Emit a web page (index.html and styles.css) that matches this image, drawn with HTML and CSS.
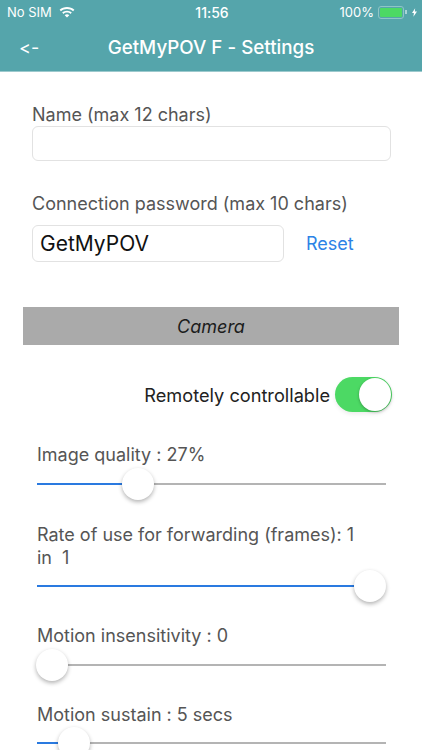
FILE: index.html
```html
<!DOCTYPE html>
<html lang="en">
<head>
<meta charset="utf-8">
<title>GetMyPOV F - Settings</title>
<link rel="stylesheet" href="styles.css">
</head>
<body>
<div class="screen">
  <header class="header">
    <div class="status">
      <div class="status-left">
        <span>No SIM</span>
        <svg class="wifi" viewBox="0 0 16 12" width="16" height="12"><path fill="#fff" d="M8 1C5.2 1 2.6 2 .6 3.800l1.300 1.400C3.600 3.700 5.700 2.900 8 2.900s4.400.8 6.100 2.300l1.300-1.400C13.400 2 10.800 1 8 1zM8 4.700c-1.800 0-3.500.7-4.800 1.800l1.300 1.400C5.400 7 6.600 6.500 8 6.500s2.600.5 3.500 1.400l1.300-1.400C11.500 5.400 9.800 4.700 8 4.700zM8 8.300c-.9 0-1.700.3-2.300.9L8 11.600l2.300-2.400c-.6-.6-1.400-.9-2.300-.9z"/></svg>
      </div>
      <span class="clock">11:56</span>
      <div class="status-right">
        <span>100%</span>
        <span class="battery"><span class="battery-fill"></span></span>
        <span class="battery-cap"></span>
        <svg class="bolt" viewBox="0 0 6 10" width="5" height="9"><path fill="#fff" d="M3.800 0 0 5.600h2.300L1.700 10 6 3.900H3.400z"/></svg>
      </div>
    </div>
    <div class="navbar">
      <span class="back">&lt;-</span>
      <span class="title">GetMyPOV F - Settings</span>
    </div>
  </header>

  <main class="content">
    <section class="form">
      <label class="field-label">Name (max 12 chars)</label>
      <div class="input name-input"></div>
      <label class="field-label password-label">Connection password (max 10 chars)</label>
      <div class="password-row">
        <div class="input password-input">GetMyPOV</div>
        <span class="reset">Reset</span>
      </div>
    </section>

    <div class="band">Camera</div>

    <div class="toggle-row">
      <span>Remotely controllable</span>
      <span class="switch"><span class="knob"></span></span>
    </div>

    <div class="slider-block quality">
      <div class="slider-label">Image quality : 27%</div>
      <div class="slider"><span class="fill fill-27"></span><span class="thumb thumb-27"></span></div>
    </div>
    <div class="slider-block rate">
      <div class="slider-label">Rate of use for forwarding (frames): 1<br>in&nbsp; 1</div>
      <div class="slider"><span class="fill fill-100"></span><span class="thumb thumb-100"></span></div>
    </div>
    <div class="slider-block insens">
      <div class="slider-label">Motion insensitivity : 0</div>
      <div class="slider"><span class="thumb thumb-0"></span></div>
    </div>
    <div class="slider-block sustain">
      <div class="slider-label">Motion sustain : 5 secs</div>
      <div class="slider"><span class="fill fill-5"></span><span class="thumb thumb-5"></span></div>
    </div>
  </main>
</div>
</body>
</html>
```
FILE: styles.css
```css
* { box-sizing: border-box; }
html, body { margin: 0; padding: 0; }
body {
  width: 422px;
  height: 750px;
  overflow: hidden;
  background: #fff;
  font-family: Inter, "Liberation Sans", sans-serif;
  font-variant-ligatures: none;
  font-feature-settings: "calt" 0;
  color: #4f4f4f;
}
.screen { width: 422px; height: 750px; overflow: hidden; }
.header { height: 72px; background: #55a5ab; border-bottom: 1px solid #9cc9cd; color: #fff; }
.status {
  height: 24px;
  padding: 0 5px 0 7px;
  display: grid;
  grid-template-columns: 1fr auto 1fr;
  align-items: center;
  font-size: 13px;
}
.status-left { display: flex; align-items: center; gap: 7px; }
.status-right { display: flex; align-items: center; justify-content: flex-end; gap: 0; }
.clock { font-size: 14px; font-weight: 500; }
.battery {
  width: 26px; height: 13px; margin-left: 4px;
  border: 1px solid #8fc6c6; border-radius: 3px; padding: 1px; display: block;
}
.battery-fill { display: block; width: 100%; height: 100%; background: #4cd964; border-radius: 1px; }
.battery-cap { width: 2px; height: 4px; background: #a9d4d6; margin-left: 1px; }
.bolt { margin-left: 5px; }
.navbar { height: 47px; position: relative; display: flex; align-items: center; justify-content: center; }
.back { position: absolute; left: 19px; top: 13px; font-size: 18px; line-height: 22px; }
.title { font-size: 18.8px; font-weight: 500; }
.content { display: flex; flex-direction: column; }
.form { padding: 31px 32px 0; }
.field-label { display: block; font-size: 18px; line-height: 23px; color: #555; }
.input { border: 1px solid #e2e2e2; border-radius: 6px; background: #fff; }
.name-input { width: 359px; height: 35px; }
.password-label { margin-top: 31px; }
.password-row { display: flex; align-items: center; margin-top: 10px; }
.password-input {
  width: 252px; height: 37px; padding: 0 7px;
  display: flex; align-items: center;
  font-size: 21px; color: #111;
}
.reset { margin-left: 22px; font-size: 18px; color: #2c83e6; }
.band {
  margin: 45px 23px 0; height: 38px; background: #aaa;
  display: flex; align-items: center; justify-content: center;
  font-size: 18px; font-style: italic; color: #1c1c1c;
}
.toggle-row {
  margin-top: 32px; padding-right: 30px; height: 35px;
  display: flex; align-items: center; justify-content: flex-end; gap: 5px;
  font-size: 18.2px; color: #222;
}
.switch {
  width: 57px; height: 35px; border-radius: 18px; background: #4cd964;
  padding: 1px; display: flex; justify-content: flex-end;
  box-shadow: 0 2px 4px rgba(0,0,0,.08);
}
.knob { width: 32px; height: 33px; border-radius: 50%; background: #fff; box-shadow: 0 1px 3px rgba(0,0,0,.3); }
.slider-block { padding: 0 36px 0 37px; }
.slider-label { font-size: 18px; line-height: 23px; color: #555; }
.slider { position: relative; height: 2px; background: #b4b4b4; margin-top: 16.5px; }
.quality { margin-top: 31px; }
.rate { margin-top: 38px; }
.insens { margin-top: 37px; }
.sustain { margin-top: 37px; }
.fill { position: absolute; left: 0; top: 0; height: 2px; background: #2a7ae0; display: block; }
.thumb {
  position: absolute; top: -15px; width: 32px; height: 32px; border-radius: 50%;
  background: #fff; box-shadow: 0 2px 4px rgba(0,0,0,.3);
}
.fill-27 { width: 92px; }
.thumb-27 { left: 85px; }
.fill-100 { width: 318px; }
.thumb-100 { left: 317px; }
.thumb-0 { left: -1px; }
.fill-5 { width: 21px; }
.thumb-5 { left: 21px; }
```
